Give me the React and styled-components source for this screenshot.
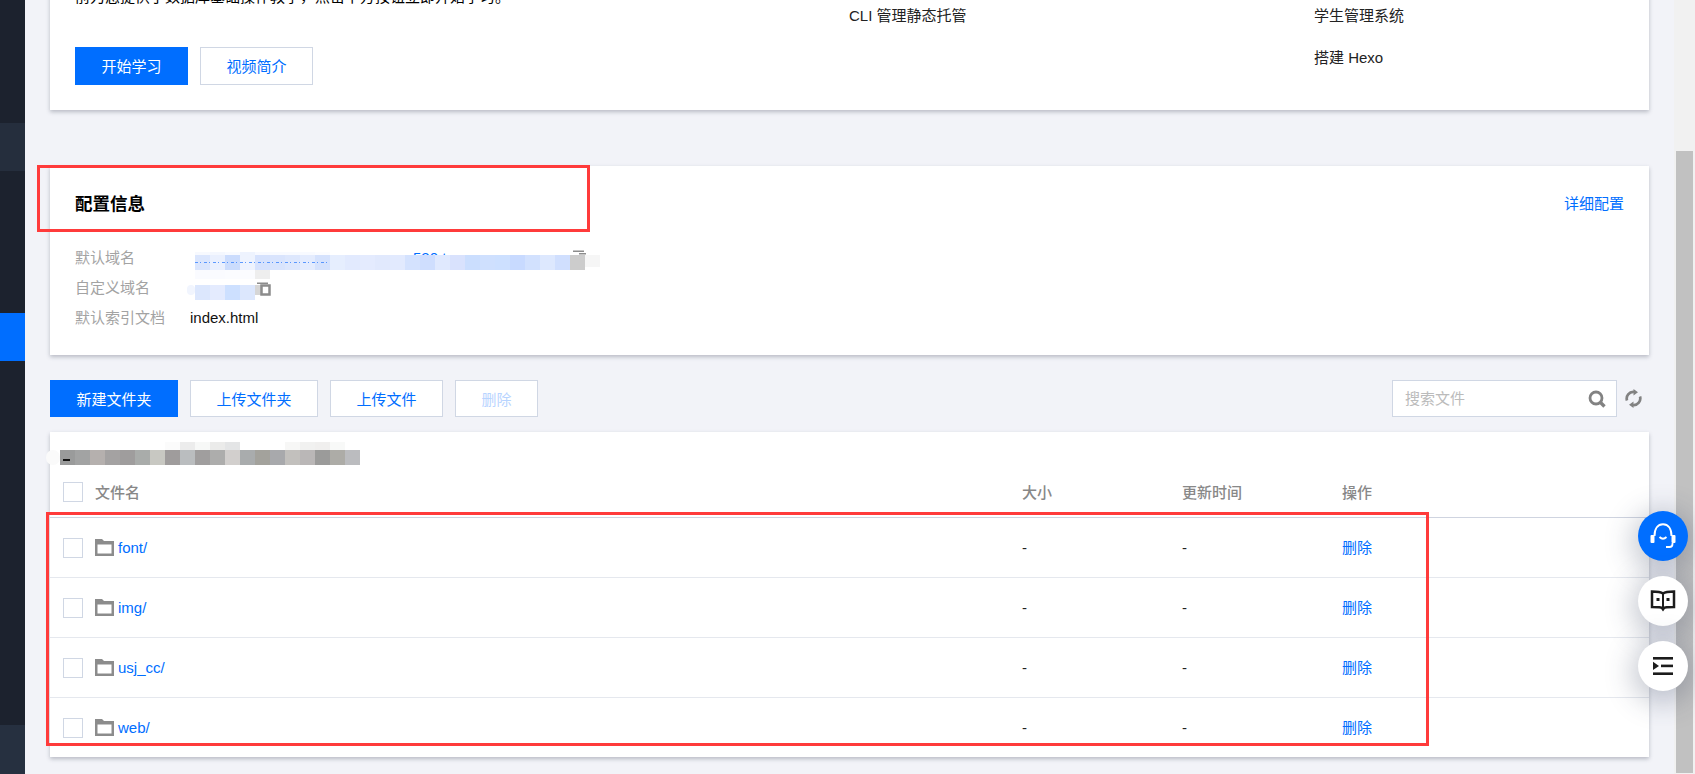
import React from "react";
import styled, { createGlobalStyle } from "styled-components";

const GlobalStyle = createGlobalStyle`
  html, body {
    margin: 0;
    padding: 0;
    overflow: hidden;
    background: #f2f3f8;
  }
  * {
    box-sizing: border-box;
  }
`;

// STYLED
const Page = styled.div`
  position: relative;
  display: flex;
  width: 1695px;
  height: 774px;
  overflow: hidden;
  background: #f2f3f8;
  color: #000;
  font-family: "Liberation Sans", "Noto Sans CJK SC", sans-serif;
  font-size: 15px;
`;

const Sidebar = styled.div`
  display: flex;
  flex-direction: column;
  flex: 0 0 25px;
  background: #1c222e;
`;

const SideItem = styled.div`
  flex: 0 0 ${(p) => p.$height}px;
  background: ${(p) => p.$color || "transparent"};
`;

const Main = styled.main`
  flex: 1;
  min-width: 0;
  padding: 0 25px;
  margin-top: -42px;
`;

const Scrollbar = styled.div`
  flex: 0 0 21px;
  padding: 151px 2px 1px;
  background: #f1f1f1;
`;

const Thumb = styled.div`
  height: 100%;
  background: #c1c1c1;
`;

const Card = styled.section`
  background: #fff;
  box-shadow: 0 2px 4px rgba(54, 58, 80, 0.3);
`;

const IntroCard = styled(Card)`
  display: flex;
  height: 152px;
  padding: 28px 25px 0;
  margin-bottom: 56px;
`;

const IntroLeft = styled.div`
  flex: 0 0 774px;
  line-height: 22px;
`;

const IntroList = styled.div`
  flex: 0 0 ${(p) => p.$width}px;
  display: flex;
  flex-direction: column;
  gap: 20px;
  padding-top: 19px;
  line-height: 22px;
  color: #222;
`;

const ButtonRow = styled.div`
  display: flex;
  gap: 12px;
  margin-top: ${(p) => p.$top || 0}px;
`;

const Button = styled.button`
  height: 37px;
  width: ${(p) => p.$width}px;
  padding: 0;
  font: inherit;
  border: 1px solid ${(p) => (p.$primary ? "#006eff" : "#d0d7e4")};
  background: ${(p) => (p.$primary ? "#006eff" : "#fff")};
  color: ${(p) => (p.$primary ? "#fff" : p.disabled ? "#b8d4ff" : "#006eff")};
`;

const IntroButton = styled(Button)`
  height: 38px;
  padding-top: 2px;
`;

const ConfigCard = styled(Card)`
  height: 189px;
  padding: 24px 25px 0;
`;

const ConfigHead = styled.div`
  display: flex;
  align-items: center;
  justify-content: space-between;
  height: 24px;
  margin-bottom: 28px;
`;

const ConfigTitle = styled.h3`
  margin: 0;
  font-size: 17.5px;
  font-weight: 700;
  color: #000;
`;

const Link = styled.a`
  color: #006eff;
  text-decoration: none;
`;

const ConfigRow = styled.div`
  position: relative;
  display: flex;
  align-items: center;
  height: 30px;
`;

// CJK text sits a pixel low in its line box
const CjkCell = styled.span`
  margin-bottom: 2px;
`;

const ConfigLabel = styled(CjkCell)`
  flex: 0 0 115px;
  color: #a3a3a3;
`;

const ConfigValue = styled.span`
  color: #111;
`;

const DeleteLink = styled(Link)`
  margin-bottom: 2px;
`;

// mosaic that hides the private domain names, it sits over the row
const Mosaic = styled.div`
  position: absolute;
  left: ${(p) => p.$left}px;
  top: ${(p) => p.$top}px;
  display: flex;
`;

const MosaicCell = styled.div`
  width: ${(p) => p.$width || 15}px;
  height: ${(p) => p.$height || 15}px;
  background: ${(p) => p.$color};
  border-radius: ${(p) => p.$radius || 0}px;
`;

const DashLine = styled.div`
  position: absolute;
  left: 120px;
  top: 20px;
  width: 135px;
  height: 1px;
  opacity: 0.75;
  background: repeating-linear-gradient(90deg, #2f7dff 0 3px, transparent 3px 5px, #2f7dff 5px 6px, transparent 6px 9px);
`;

const HiddenDomain = styled.div`
  position: absolute;
  left: 338px;
  top: 10px;
  line-height: 11px;
  color: #006eff;
`;

const CopyIcon = styled.svg`
  position: absolute;
  left: ${(p) => p.$left}px;
  top: ${(p) => p.$top}px;
  width: 14px;
  height: 15px;
`;

const Toolbar = styled.div`
  display: flex;
  align-items: center;
  height: 37px;
  margin: 25px 0 15px;
`;

const SearchBox = styled.div`
  display: flex;
  align-items: center;
  justify-content: space-between;
  width: 225px;
  height: 37px;
  margin-left: auto;
  padding: 0 10px 0 12px;
  border: 1px solid #d0d7e4;
  background: #fff;
  color: #bbb;
`;

const RefreshSlot = styled.div`
  display: flex;
  align-items: center;
  justify-content: center;
  width: 32px;
  height: 37px;
`;

const TableCard = styled(Card)`
  height: 325px;
`;

const PathRow = styled.div`
  height: 35px;
  padding-top: 10px;
`;

const PathFaint = styled.div`
  display: flex;
  height: 8px;
  margin-left: 115px;
`;

const PathBlur = styled.div`
  display: flex;
  height: 15px;
  margin-left: -4px;
`;

// first mosaic cell, a bit of the dark path text still shows through it
const PathStart = styled.div`
  width: 15px;
  height: 15px;
  background: linear-gradient(#151515, #151515) 3px 9px / 7px 2px no-repeat, #9a9b9b;
`;

const TableRow = styled.div`
  display: grid;
  grid-template-columns: 32px 927px 160px 160px 1fr;
  align-items: center;
  height: ${(p) => (p.$head ? 51 : 60)}px;
  padding-left: 13px;
  border-bottom: 1px solid ${(p) => (p.$head ? "#cfd4e0" : p.$last ? "transparent" : "#e5e8ee")};
  color: ${(p) => (p.$head ? "#888" : "#222")};
  font-weight: ${(p) => (p.$head ? 500 : 400)};
`;

const Checkbox = styled.span`
  display: block;
  width: 20px;
  height: 20px;
  border: 1px solid #d0d7e4;
  background: #fff;
`;

const NameCell = styled.div`
  display: flex;
  align-items: center;
  gap: 4px;
`;

const Annotation = styled.div`
  position: absolute;
  left: ${(p) => p.$left}px;
  top: ${(p) => p.$top}px;
  width: ${(p) => p.$width}px;
  height: ${(p) => p.$height}px;
  border: 3px solid #ff3b3b;
  pointer-events: none;
`;

const FloatStack = styled.div`
  position: absolute;
  right: 7px;
  top: 511px;
  display: flex;
  flex-direction: column;
  gap: 15px;
`;

const FloatButton = styled.div`
  display: flex;
  align-items: center;
  justify-content: center;
  width: 50px;
  height: 50px;
  border-radius: 50%;
  background: ${(p) => (p.$primary ? "#006eff" : "#fff")};
  box-shadow: 0 6px 28px 6px rgba(50, 60, 90, 0.28);
`;

const FILES = ["font/", "img/", "usj_cc/", "web/"];

const DOMAIN_CELLS = [
  "#dbe6fd", "#eaf0fe", "#cbdcfd", "#eef3fe", "#d6e2fd", "#d9e4fd", "#dde7fd", "#e4ecfe",
  "#d5e2fd", "#e6eefe", "#e2eafe", "#e4ebfe", "#e1e9fd", "#e2eafe", "#d4e2fe", "#cfdefe",
  "#e0e9fe", "#d9e2fd", "#cbdefe", "#cfe0fe", "#cde0ff", "#c8daff", "#d2e1fe", "#dde8fe",
  "#d0dffe",
];

const DOMAIN_TOP = ["#f7f9fe", "#f4f7fe", "#f8faff", "#eef3fe", "#f7f9ff", "#f8faff", "#f8faff", "#f8faff", "#fbfcff"];

const DOMAIN_BOTTOM = ["#fafbff", "#fafbff", "#fbfcff", "#fbfcff", "#eeeeee"];

const CUSTOM_CELLS = ["#dce7fd", "#e4ebfe", "#cde0ff", "#dce7fd"];

const PATH_TOP = [
  "#fbfbfb", "#ececec", "#f7f8f7", "#ebebea", "#e4e5e6", "transparent", "transparent", "transparent",
  "#f7f7f6", "#f1f1f0", "#f0efee", "#f8f9f8",
];

const PATH_CELLS = [
  "#a2a3a3", "#b5b0ae", "#a4a2a2", "#9f9d9d", "#a9acaa", "#c8c8c2", "#9f9c9c", "#babdbf",
  "#a09e9e", "#adadac", "#d2cfcd", "#a9acad", "#a3a29c", "#a8a9ac", "#c2c0bd", "#bab7b7",
  "#9b9b9a", "#adaca7", "#bbbcbf",
];

function FolderIcon() {
  return (
    <svg width="19" height="17" viewBox="0 0 19 17">
      <path fill="#8c8c8c" d="M0 0h7l2 2h10v15H0z" />
      <rect x="2.5" y="5.5" width="14" height="9" fill="#fff" />
    </svg>
  );
}

function SearchIcon() {
  return (
    <svg width="18" height="18" viewBox="0 0 18 18" fill="none" stroke="#828282">
      <circle cx="8" cy="8" r="6" strokeWidth="2.8" />
      <path d="M12.5 12.5 L16.5 16.5" strokeWidth="3.4" />
    </svg>
  );
}

function RefreshIcon() {
  return (
    <svg width="17" height="19" viewBox="0 0 17 19" fill="none" stroke="#828282" strokeWidth="2.7">
      <path d="M2 11.5A6.6 6.6 0 0 1 9 3" />
      <path d="M15 7.5A6.6 6.6 0 0 1 8 16" />
      <path fill="#828282" stroke="none" d="M8.5 0l4.500 3.200-4.500 3.300zM8.500 19l-4.500-3.200 4.500-3.300z" />
    </svg>
  );
}

function HeadsetIcon() {
  return (
    <svg width="26" height="26" viewBox="0 0 26 26" fill="none" stroke="#fff">
      <path d="M4.500 13C4.500 5.500 8 1.200 13 1.200S21.500 5.500 21.500 13" strokeWidth="2" />
      <rect x="0.500" y="12" width="4" height="8" rx="1" fill="#fff" stroke="none" />
      <rect x="21.500" y="12" width="4" height="8" rx="1" fill="#fff" stroke="none" />
      <path d="M9.500 14q3.500 3.400 7 0" strokeWidth="1.800" />
      <path d="M22.500 20v1a3 3 0 0 1-3 3H16" strokeWidth="1.800" />
    </svg>
  );
}

function BookIcon() {
  return (
    <svg width="26" height="22" viewBox="0 0 26 22" fill="none" stroke="#1c1c1c" strokeWidth="2.500">
      <path d="M13 3.500C11 2 7 1.500 2 1.500v15.500c4.500 0 9 0 11 1 2-1 6.500-1 11-1V1.500c-5 0-9 .5-11 2z" />
      <path d="M13 3.500V18" strokeWidth="2" />
      <path fill="#1c1c1c" stroke="none" d="M10.500 18h5l-2.500 3.500zM6.500 8h3v3h-3zM16.500 8h3v3h-3z" />
    </svg>
  );
}

function IndentIcon() {
  return (
    <svg width="22" height="20" viewBox="0 0 22 20" fill="#1c1c1c">
      <rect x="1" y="1" width="20" height="2.600" />
      <rect x="9" y="8.600" width="12" height="2.600" />
      <rect x="1" y="16.400" width="20" height="2.600" />
      <path d="M1 5.800l6 4.100-6 4.100z" />
    </svg>
  );
}

function CopyGlyph({ left, top, square }) {
  return (
    <CopyIcon $left={left} $top={top} viewBox="0 0 14 15">
      <rect x="0" y="0.500" width="11" height="1.500" fill="#8c8c8c" />
      {square && <rect x="4.500" y="3.500" width="8" height="9" fill="#fff" stroke="#8c8c8c" strokeWidth="2.500" />}
      {!square && <rect x="6" y="3" width="7" height="1.500" fill="#8c8c8c" />}
    </CopyIcon>
  );
}

/**
 *
 * Static console page: intro card, site config and the file list.
 *
 */
export default function App() {
  return (
    <Page>
      <GlobalStyle />
      <Sidebar>
        <SideItem $height={123} />
        <SideItem $height={48} $color="#252e3d" />
        <SideItem $height={142} />
        <SideItem $height={48} $color="#006eff" />
        <SideItem $height={364} />
        <SideItem $height={49} $color="#263040" />
      </Sidebar>

      <Main>
        <IntroCard>
          <IntroLeft>
            前为您提供了数据库基础操作教学，点击下方按钮立即开始学习。
            <ButtonRow $top={39}>
              <IntroButton $primary $width={113}>开始学习</IntroButton>
              <IntroButton $width={113}>视频简介</IntroButton>
            </ButtonRow>
          </IntroLeft>
          <IntroList $width={465}>
            <span>CLI 管理静态托管</span>
          </IntroList>
          <IntroList $width={300}>
            <span>学生管理系统</span>
            <span>搭建 Hexo</span>
          </IntroList>
        </IntroCard>

        <ConfigCard>
          <ConfigHead>
            <ConfigTitle>配置信息</ConfigTitle>
            <Link>详细配置</Link>
          </ConfigHead>
          <ConfigRow>
            <ConfigLabel>默认域名</ConfigLabel>
            <HiddenDomain>530 tc</HiddenDomain>
            <Mosaic $left={120} $top={10}>
              {DOMAIN_TOP.map((c, i) => (
                <MosaicCell key={i} $color={c} $height={3} />
              ))}
            </Mosaic>
            <Mosaic $left={120} $top={13}>
              {DOMAIN_CELLS.map((c, i) => (
                <MosaicCell key={i} $color={c} />
              ))}
              <MosaicCell $color="#cccccc" />
              <MosaicCell $color="#f6f6f6" $height={12} />
            </Mosaic>
            <Mosaic $left={120} $top={28}>
              {DOMAIN_BOTTOM.map((c, i) => (
                <MosaicCell key={i} $color={c} $height={9} />
              ))}
            </Mosaic>
            <DashLine />
            <CopyGlyph left={498} top={8} />
          </ConfigRow>
          <ConfigRow>
            <ConfigLabel>自定义域名</ConfigLabel>
            <Mosaic $left={112} $top={13}>
              <MosaicCell $color="#f1f5fe" $width={8} $height={10} $radius={4} />
              {CUSTOM_CELLS.map((c, i) => (
                <MosaicCell key={i} $color={c} />
              ))}
              <MosaicCell $color="#d6d6d6" $width={8} $height={10} />
            </Mosaic>
            <CopyGlyph left={182} top={10} square />
          </ConfigRow>
          <ConfigRow>
            <ConfigLabel>默认索引文档</ConfigLabel>
            <ConfigValue>index.html</ConfigValue>
          </ConfigRow>
        </ConfigCard>

        <Toolbar>
          <ButtonRow>
            <Button $primary $width={128}>新建文件夹</Button>
            <Button $width={128}>上传文件夹</Button>
            <Button $width={113}>上传文件</Button>
            <Button $width={83} disabled>删除</Button>
          </ButtonRow>
          <SearchBox>
            <CjkCell>搜索文件</CjkCell>
            <SearchIcon />
          </SearchBox>
          <RefreshSlot>
            <RefreshIcon />
          </RefreshSlot>
        </Toolbar>

        <TableCard>
          <PathRow>
            <PathFaint>
              {PATH_TOP.map((c, i) => (
                <MosaicCell key={i} $color={c} $height={8} />
              ))}
            </PathFaint>
            <PathBlur>
              <MosaicCell $color="#fafafa" $width={14} $radius={7} />
              <PathStart />
              {PATH_CELLS.map((c, i) => (
                <MosaicCell key={i} $color={c} />
              ))}
            </PathBlur>
          </PathRow>
          <TableRow $head>
            <Checkbox />
            <CjkCell>文件名</CjkCell>
            <CjkCell>大小</CjkCell>
            <CjkCell>更新时间</CjkCell>
            <CjkCell>操作</CjkCell>
          </TableRow>
          {FILES.map((name, i) => (
            <TableRow key={name} $last={i === FILES.length - 1}>
              <Checkbox />
              <NameCell>
                <FolderIcon />
                <Link>{name}</Link>
              </NameCell>
              <span>-</span>
              <span>-</span>
              <DeleteLink>删除</DeleteLink>
            </TableRow>
          ))}
        </TableCard>
      </Main>

      <Scrollbar>
        <Thumb />
      </Scrollbar>

      <Annotation $left={37} $top={165} $width={553} $height={67} />
      <Annotation $left={46} $top={512} $width={1383} $height={234} />

      <FloatStack>
        <FloatButton $primary>
          <HeadsetIcon />
        </FloatButton>
        <FloatButton>
          <BookIcon />
        </FloatButton>
        <FloatButton>
          <IndentIcon />
        </FloatButton>
      </FloatStack>
    </Page>
  );
}
